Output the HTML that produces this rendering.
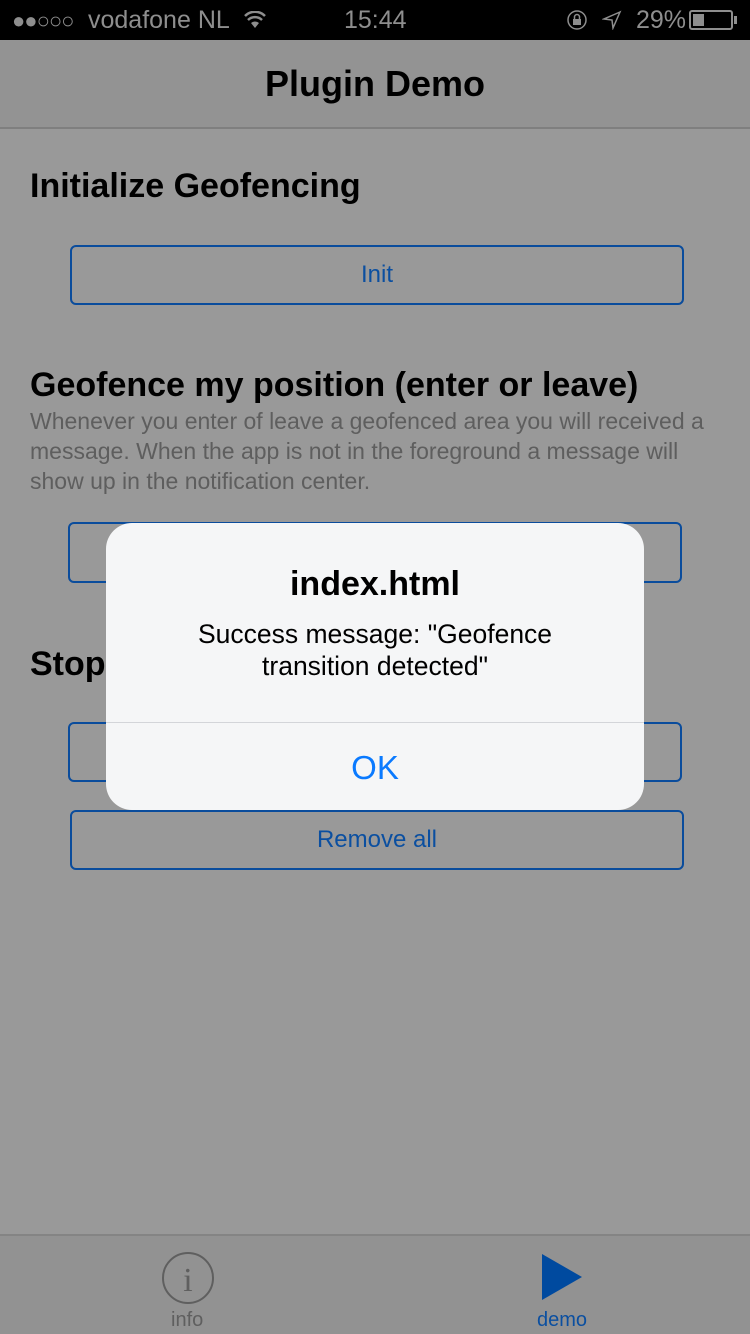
<!DOCTYPE html>
<html><head><meta charset="utf-8"><style>
*{margin:0;padding:0;box-sizing:border-box}
body{width:750px;height:1334px;background:#999;font-family:"Liberation Sans",Arial,sans-serif;position:relative;overflow:hidden}
.abs{position:absolute;white-space:nowrap}
.sb{position:absolute;left:0;top:0;width:750px;height:40px;background:#000;color:#8e8e8e;font-size:25px}
.hdr{position:absolute;left:0;top:40px;width:750px;height:89px;background:#939393;border-bottom:2px solid #7f7f7f}
.h{font-weight:bold;font-size:34px;color:#000}
.btn{position:absolute;height:60px;border:2px solid #0a4c9c;border-radius:6px;color:#0b4fa0;font-size:24px;text-align:center;line-height:56px}
.p{font-size:23px;color:#5e5e5e;line-height:30px}
.tab{position:absolute;left:0;top:1234px;width:750px;height:100px;background:#929292;border-top:2px solid #848484}
.dlg{position:absolute;left:106px;top:523px;width:538px;height:287px;background:#f5f6f7;border-radius:26px;text-align:center;overflow:hidden}
</style></head><body>
<div class="sb">
<div class="abs" style="left:12px;top:8px;font-size:22px;letter-spacing:-1px">●●○○○</div>
<div class="abs" style="left:88px;top:6px">vodafone NL</div>
<svg class="abs" style="left:244px;top:11px" width="22" height="18" viewBox="0 0 22 18"><path d="M11 17 L7 12 A6 6 0 0 1 15 12 Z" fill="#8e8e8e"/><path d="M4 9 A10 10 0 0 1 18 9" stroke="#8e8e8e" stroke-width="2.5" fill="none"/><path d="M1 5 A14 14 0 0 1 21 5" stroke="#8e8e8e" stroke-width="2.5" fill="none"/></svg>
<div class="abs" style="left:344px;top:6px">15:44</div>
<svg class="abs" style="left:566px;top:9px" width="24" height="22" viewBox="0 0 24 22"><circle cx="11" cy="11" r="9" stroke="#8e8e8e" stroke-width="1.5" fill="none"/><rect x="7" y="10" width="8" height="6" fill="#8e8e8e"/><path d="M8.5 10 V8 a2.5 2.5 0 0 1 5 0 V10" stroke="#8e8e8e" stroke-width="1.5" fill="none"/></svg>
<svg class="abs" style="left:602px;top:10px" width="20" height="20" viewBox="0 0 20 20"><path d="M18 2 L2 9 L10 10 L11 18 Z" stroke="#8e8e8e" stroke-width="1.5" fill="none"/></svg>
<div class="abs" style="left:636px;top:6px">29%</div>
<div class="abs" style="left:689px;top:10px;width:44px;height:20px;border:2px solid #8e8e8e;border-radius:3px"><div style="margin:2px;width:11px;height:12px;background:#8e8e8e"></div></div>
<div class="abs" style="left:734px;top:16px;width:3px;height:8px;background:#8e8e8e"></div>
</div>
<div class="hdr"><div class="abs" style="left:0;width:750px;text-align:center;top:23px;font-size:36px;font-weight:bold">Plugin Demo</div></div>

<div class="abs h" style="left:30px;top:167px">Initialize Geofencing</div>
<div class="btn" style="left:70px;top:245px;width:614px">Init</div>
<div class="abs h" style="left:30px;top:366px">Geofence my position (enter or leave)</div>
<div class="abs p" style="left:30px;top:406px">Whenever you enter of leave a geofenced area you will received a<br>message. When the app is not in the foreground a message will<br>show up in the notification center.</div>
<div class="btn" style="left:68px;top:522px;width:614px;height:61px"></div>
<div class="abs h" style="left:30px;top:645px">Stop</div>
<div class="btn" style="left:68px;top:722px;width:614px"></div>
<div class="btn" style="left:70px;top:810px;width:614px">Remove all</div>

<div class="dlg">
<div class="abs" style="left:0;width:538px;top:42px;font-size:34px;font-weight:bold;color:#000">index.html</div>
<div class="abs" style="left:0;width:538px;top:95px;font-size:26.5px;line-height:32px;color:#000">Success message: "Geofence<br>transition detected"</div>
<div class="abs" style="left:0;top:199px;width:538px;height:1px;background:#d3d5d9"></div>
<div class="abs" style="left:0;width:538px;top:226px;font-size:33px;color:#0a7aff">OK</div>
</div>

<div class="tab">
<svg class="abs" style="left:160px;top:14px" width="56" height="56" viewBox="0 0 56 56"><circle cx="28" cy="28" r="25" stroke="#5f5f5f" stroke-width="2" fill="none"/><text x="28" y="41" text-anchor="middle" font-family="Liberation Serif,serif" font-size="34" fill="#5f5f5f">i</text></svg>
<div class="abs" style="left:171px;top:73px;font-size:20px;color:#5f5f5f">info</div>
<svg class="abs" style="left:542px;top:18px" width="40" height="46" viewBox="0 0 40 46"><path d="M0 0 L40 23 L0 46 Z" fill="#004a9f"/></svg>
<div class="abs" style="left:537px;top:73px;font-size:20px;color:#0b4fa0">demo</div>
</div>
</body></html>
